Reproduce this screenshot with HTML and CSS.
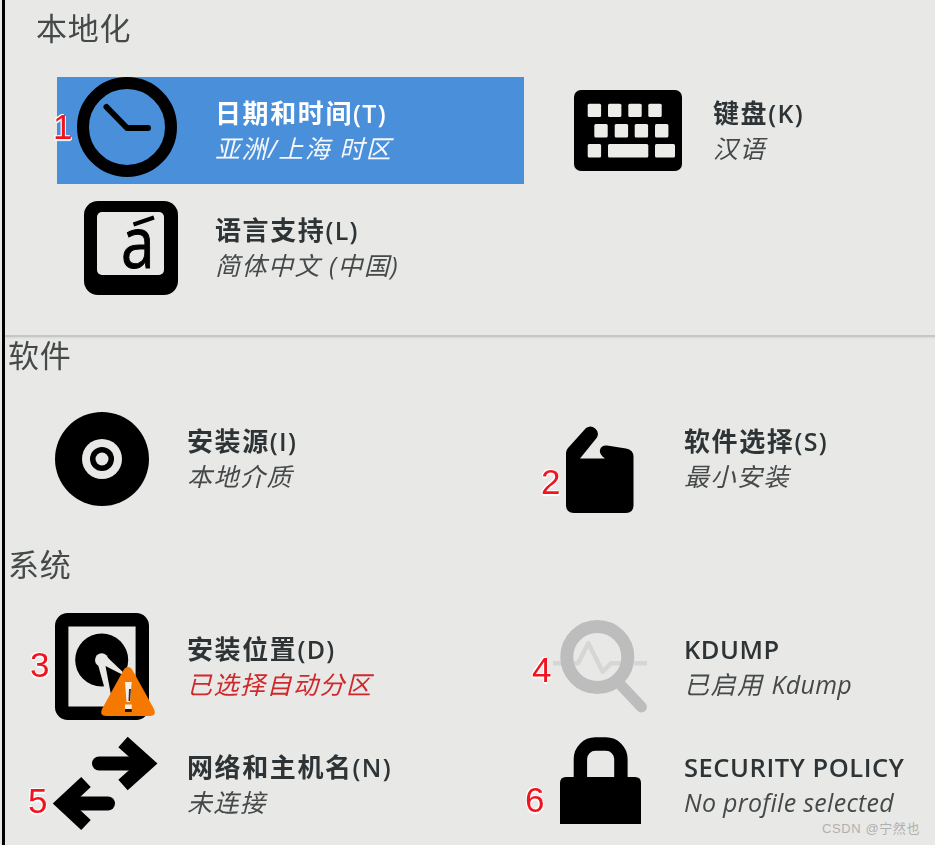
FILE: index.html
```html
<!DOCTYPE html>
<html lang="zh-CN">
  <head>
    <meta charset="UTF-8" />
    <meta name="viewport" content="width=device-width, initial-scale=1.0" />
    <title>安装信息摘要</title>
    <link rel="stylesheet" href="styles.css">
  </head>
  <body>
    <div class="screen">
      <section class="top-section">
        <h2 class="section-title title-local">本地化</h2>
        <div class="local-grid">
          <div class="item item-selected">
            <svg class="icon icon-clock" viewBox="0 0 100 100">
              <circle cx="50" cy="50" r="44" fill="none" stroke="#000" stroke-width="12" />
              <path d="M29.5 30 L50 51 H71" fill="none" stroke="#000" stroke-width="6" stroke-linecap="round" stroke-linejoin="round" />
            </svg>
            <div class="item-text">
              <div class="item-name">日期和时间<span class="key">(T)</span></div>
              <div class="item-status">亚洲/上海 时区</div>
            </div>
          </div>
          <div class="item item-keyboard">
            <svg class="icon icon-keyboard" viewBox="0 0 108 81">
              <rect width="108" height="81" rx="7" fill="#000" />
              <g fill="#ecece9">
                <rect x="13.7" y="13.7" width="13.4" height="13.4" rx="1.5" />
                <rect x="34" y="13.7" width="13.4" height="13.4" rx="1.5" />
                <rect x="54.3" y="13.7" width="13.4" height="13.4" rx="1.5" />
                <rect x="74.3" y="13.7" width="13.4" height="13.4" rx="1.5" />
                <rect x="20.3" y="34" width="13.4" height="13.4" rx="1.5" />
                <rect x="40.7" y="34" width="13.4" height="13.4" rx="1.5" />
                <rect x="60.7" y="34" width="13.4" height="13.4" rx="1.5" />
                <rect x="81" y="34" width="13.4" height="13.4" rx="1.5" />
                <rect x="13.7" y="54" width="13.4" height="13.4" rx="1.5" />
                <rect x="34" y="54" width="40.3" height="13.4" rx="1.5" />
                <rect x="81" y="54" width="20" height="13.4" rx="1.5" />
              </g>
            </svg>
            <div class="item-text">
              <div class="item-name">键盘<span class="key">(K)</span></div>
              <div class="item-status">汉语</div>
            </div>
          </div>
          <div class="item item-language">
            <svg class="icon icon-language" viewBox="0 0 94 94">
              <rect width="94" height="94" rx="14" fill="#000" />
              <rect x="13" y="11" width="67" height="63" rx="5" fill="#e8e8e6" />
              <path d="M49.5 23.5 L70 16.5" fill="none" stroke="#000" stroke-width="4" />
              <text class="lang-glyph" transform="translate(37 67) scale(0.85 1)">a</text>
            </svg>
            <div class="item-text">
              <div class="item-name">语言支持<span class="key">(L)</span></div>
              <div class="item-status">简体中文 (中国)</div>
            </div>
          </div>
        </div>
      </section>

      <section class="section">
        <h2 class="section-title">软件</h2>
        <div class="spoke-grid row-software">
          <div class="item">
            <div class="slot">
              <svg class="icon icon-disc" viewBox="0 0 94 94">
                <circle cx="47" cy="47" r="47" fill="#000" />
                <circle cx="47" cy="47" r="20" fill="#e8e8e6" />
                <circle cx="47" cy="47" r="12" fill="#000" />
                <circle cx="47" cy="47" r="6.5" fill="#e8e8e6" />
              </svg>
            </div>
            <div class="item-text">
              <div class="item-name">安装源<span class="key">(I)</span></div>
              <div class="item-status">本地介质</div>
            </div>
          </div>
          <div class="item">
            <div class="slot">
              <svg class="icon icon-package" viewBox="0 0 68 88">
                <path d="M0 28 Q0 25 2 23 L20 3 A7.5 7.5 0 0 1 31 12.5 L14 33.5 H39 Q33 29 34 25 Q35 20 41 20.5 L60 23.5 Q67.5 24.5 67.5 32 V80 Q67.5 88 60 88 H8 Q0 88 0 80 Z" fill="#000" />
              </svg>
            </div>
            <div class="item-text">
              <div class="item-name">软件选择<span class="key">(S)</span></div>
              <div class="item-status">最小安装</div>
            </div>
          </div>
        </div>
      </section>

      <section class="section section-system">
        <h2 class="section-title">系统</h2>
        <div class="spoke-grid row-system">
          <div class="item">
            <div class="slot">
              <svg class="icon icon-disk" viewBox="0 0 94 107">
                <rect x="6.7" y="6.8" width="80.6" height="93.4" rx="6" fill="none" stroke="#000" stroke-width="13.4" />
                <circle cx="46.7" cy="47" r="26.5" fill="#000" />
                <path d="M42 48 L49.5 75 L57 79 L71 62 L51 43 Z" fill="#e8e8e6" />
                <path d="M50.5 53 L56 82 L76 66 Z" fill="#000" />
                <circle cx="46.7" cy="47" r="6.7" fill="#e8e8e6" />
                <path d="M73 54 Q76 54 78 58 L99 96 Q102 103 95 103 H51 Q44 103 47 96 L68 58 Q70 54 73 54 Z" fill="#f57900" />
                <path d="M70 69 H76.7 L75 89 H71.5 Z" fill="#f4f0ea" />
                <path d="M74 76 H76 L75 88 H73.5 Z" fill="#3a2a1a" />
                <rect x="70" y="91.5" width="6.7" height="4.5" fill="#f4f0ea" />
                <rect x="70" y="96" width="6.7" height="3" fill="#1c1408" />
              </svg>
            </div>
            <div class="item-text">
              <div class="item-name">安装位置<span class="key">(D)</span></div>
              <div class="item-status status-error">已选择自动分区</div>
            </div>
          </div>
          <div class="item">
            <div class="slot">
              <svg class="icon icon-kdump" viewBox="-8 0 96 94">
                <path d="M-7 43.3 H6 M13.7 43.3 H18 L28.3 23.3 L42.7 51.7 L51 43.3 H61 M74.3 43.3 H87" fill="none" stroke="#d6d6d4" stroke-width="4.5" stroke-linejoin="round" />
                <circle cx="37.3" cy="37" r="30.5" fill="none" stroke="#bdbdbd" stroke-width="13" />
                <path d="M58 62 L81.5 87" fill="none" stroke="#bdbdbd" stroke-width="11" stroke-linecap="round" />
              </svg>
            </div>
            <div class="item-text">
              <div class="item-name name-latin">KDUMP</div>
              <div class="item-status">已启用 <span class="status-latin">Kdump</span></div>
            </div>
          </div>
          <div class="item item-low">
            <div class="slot">
              <svg class="icon icon-network" viewBox="0 0 104 95">
                <g fill="none" stroke="#000" stroke-width="14">
                  <path d="M49 26.5 H92" stroke-linecap="round" />
                  <path d="M73 5 L97 26.5 L73 48" />
                  <path d="M20 66.5 H58" stroke-linecap="round" />
                  <path d="M36 45 L13 66.5 L36 88" />
                </g>
              </svg>
            </div>
            <div class="item-text">
              <div class="item-name">网络和主机名<span class="key">(N)</span></div>
              <div class="item-status">未连接</div>
            </div>
          </div>
          <div class="item item-low">
            <div class="slot">
              <svg class="icon icon-lock" viewBox="0 0 81 87">
                <path d="M20.4 42 V22 A15 15 0 0 1 35.4 7 H45.9 A15 15 0 0 1 60.9 22 V42" fill="none" stroke="#000" stroke-width="13.4" />
                <path d="M0 46 Q0 40 6 40 H75 Q81 40 81 46 V87 H0 Z" fill="#000" />
              </svg>
            </div>
            <div class="item-text">
              <div class="item-name name-latin">SECURITY POLICY</div>
              <div class="item-status status-latin">No profile selected</div>
            </div>
          </div>
        </div>
      </section>

      <span class="num num-1">1</span>
      <span class="num num-2">2</span>
      <span class="num num-3">3</span>
      <span class="num num-4">4</span>
      <span class="num num-5">5</span>
      <span class="num num-6">6</span>
    </div>
    <div class="watermark">CSDN @宁然也</div>
  </body>
</html>
```

FILE: styles.css
```css
html,
body {
  margin: 0;
  height: 845px;
  overflow: hidden;
  background-color: #e8e8e6;
}
body {
  position: relative;
  font-family: "Open Sans", "Noto Sans CJK SC", sans-serif;
  color: #2e3436;
}
.screen {
  position: relative;
  height: 845px;
  margin-left: 2px;
  border-left: 3px solid #000;
  filter: blur(0.45px);
}
.section-title {
  margin: 0;
  font-size: 31px;
  line-height: 36px;
  font-weight: 400;
  letter-spacing: 0.7px;
  color: #45494a;
  padding-left: 3px;
}
.top-section {
  height: 325px;
  padding-top: 10px;
  border-bottom: 2px solid #c6c6c4;
  box-shadow: 0 1px 2px rgba(0, 0, 0, 0.08);
}
.title-local {
  padding-left: 31px;
}
.local-grid {
  display: grid;
  grid-template-columns: 467px auto;
  grid-template-rows: 107px 94px;
  column-gap: 50px;
  row-gap: 17px;
  margin: 31px 0 0 52px;
}
.item {
  display: flex;
  align-items: center;
  height: 94px;
}
.item-selected {
  height: 107px;
  padding-left: 20px;
  gap: 38px;
  background-color: #4a8fd9;
  color: #fff;
}
.item-selected .icon-clock {
  align-self: flex-start;
}
.item-selected .item-status {
  color: #f4f7fb;
}
.item-keyboard {
  height: 107px;
  gap: 31px;
}
.item-language {
  padding-left: 27px;
  gap: 37px;
}
.section-system {
  padding-top: 40px;
}
.spoke-grid {
  display: grid;
  grid-template-columns: 500px auto;
  margin-left: 45px;
}
.row-software {
  margin-top: 39px;
}
.row-system {
  margin-top: 31px;
  grid-template-rows: 107px 95px;
  row-gap: 17px;
}
.row-system .item {
  height: 107px;
}
.row-system .item-low {
  height: 95px;
}
.slot {
  display: flex;
  justify-content: center;
  align-items: flex-start;
  width: 104px;
  height: 100%;
  margin-right: 33px;
  flex: none;
}
.item:nth-child(2n) .slot {
  width: 100px;
  margin-right: 34px;
}
.icon {
  display: block;
  flex: none;
  overflow: visible;
}
.icon-clock {
  width: 100px;
  height: 100px;
}
.icon-keyboard {
  width: 108px;
  height: 81px;
}
.icon-language {
  width: 94px;
  height: 94px;
}
.lang-glyph {
  font-family: "Open Sans", sans-serif;
  font-size: 71px;
  font-weight: 400;
  fill: #000;
  stroke: #000;
  stroke-width: 1px;
}
.icon-disc {
  width: 94px;
  height: 94px;
}
.icon-package {
  width: 68px;
  height: 88px;
  margin-top: 13px;
}
.icon-disk {
  width: 94px;
  height: 107px;
}
.icon-kdump {
  width: 96px;
  height: 94px;
  margin-top: 7px;
}
.icon-network {
  width: 104px;
  height: 95px;
}
.icon-lock {
  width: 81px;
  height: 87px;
}
.item-name {
  font-size: 26px;
  line-height: 35px;
  font-weight: 700;
  letter-spacing: 1.6px;
  white-space: nowrap;
}
.key {
  font-size: 25px;
  font-weight: 600;
  letter-spacing: 1.3px;
}
.name-latin {
  font-size: 25.5px;
  font-weight: 600;
  letter-spacing: 0.55px;
}
.item-status {
  font-size: 25px;
  line-height: 35px;
  font-style: italic;
  letter-spacing: 1.5px;
  color: #45494a;
  white-space: nowrap;
}
.status-error {
  color: #d0282c;
}
.status-latin {
  letter-spacing: 0.3px;
}
.num {
  position: absolute;
  font-family: "Liberation Sans", sans-serif;
  font-size: 35px;
  line-height: 36px;
  color: #f0141e;
  text-shadow: -1px 0 0 #fff, 1px 1px 0 #fff, 0 2px 1px #fff, -1px -1px 0 #fff;
}
.num-1 {
  left: 48px;
  top: 109px;
}
.num-2 {
  left: 536px;
  top: 464px;
}
.num-3 {
  left: 25px;
  top: 647px;
}
.num-4 {
  left: 527px;
  top: 652px;
}
.num-5 {
  left: 23px;
  top: 783px;
}
.num-6 {
  left: 520px;
  top: 782px;
}
.watermark {
  position: absolute;
  right: 15px;
  top: 820px;
  font-family: "Liberation Sans", "Noto Sans CJK SC", sans-serif;
  font-size: 13px;
  line-height: 17px;
  letter-spacing: 0.6px;
  color: #b0b0b0;
}
```
